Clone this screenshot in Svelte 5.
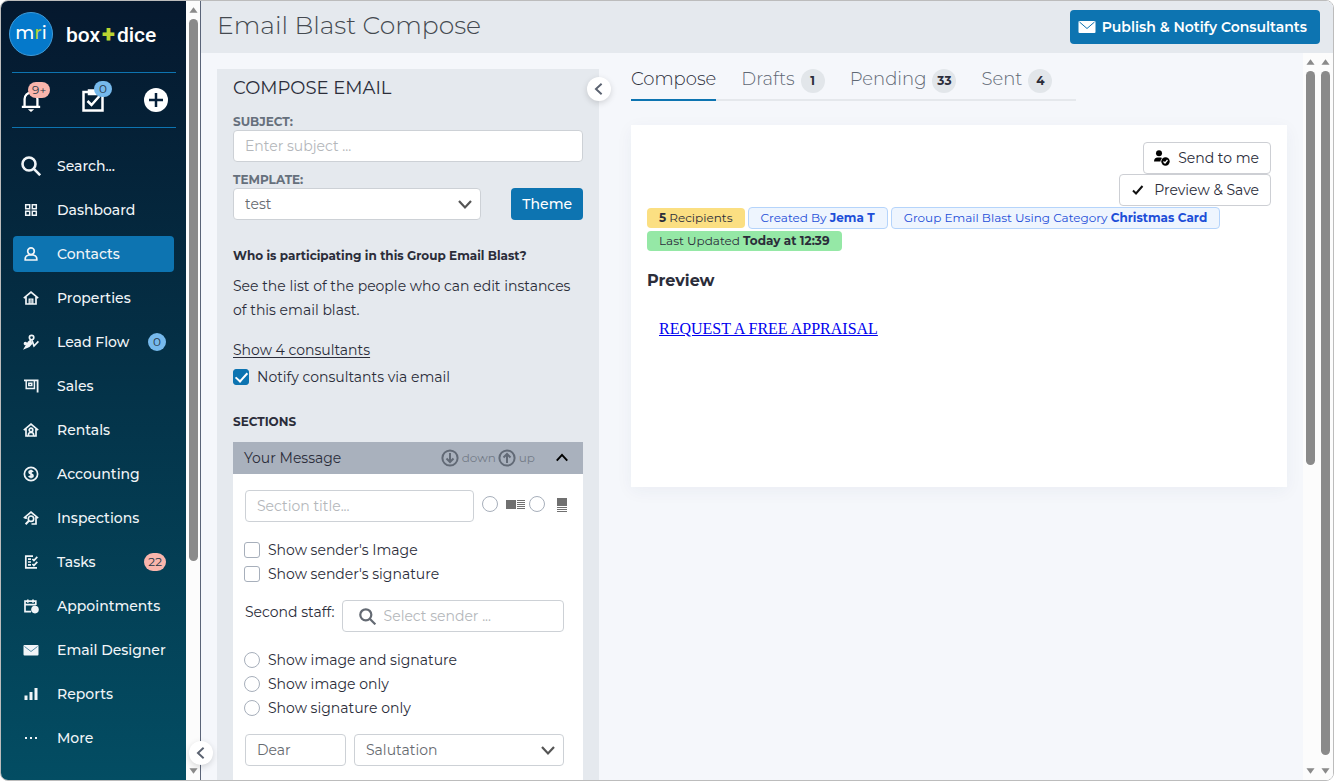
<script>
  // Inner markup of the 16x16 menu icons; stroke and fill come from the parent svg
  const icons = {
    dashboard:
      '<path d="M2.7 2.7h4v4h-4zM9.3 2.7h4v4h-4zM2.7 9.3h4v4h-4zM9.3 9.3h4v4h-4z" stroke-width="1.5"/>',
    contacts:
      '<circle cx="8" cy="5.2" r="3.3"/><path d="M2.2 14v-1c0-2 1.6-3.6 3.6-4h4.4c2 .4 3.6 2 3.6 4v1z"/>',
    properties:
      '<path d="M.8 8.2 8 2.2l7.2 6M3 7v7h10V7"/><path d="M6.2 14V9.2h3.6V14M8 10v4" stroke-width="1.3"/>',
    lead: '<circle cx="8.6" cy="3.6" r="2.2"/><path d="M8 6 5.4 8.4 2 14l4-1.6L9 9" fill="currentColor"/><path d="M9 6.4 11 12l4.4-4.6"/><circle cx="2.4" cy="9.4" r=".9" fill="currentColor"/>',
    sales:
      '<path d="M1 2.4h13.6v12" stroke-width="1.8"/><path d="M3.2 2.4v8h8.200v-8M5.800 5.200h3v2.400h-3z" stroke-width="1.500"/>',
    rentals:
      '<path d="M.8 8.2 8 2.2l7.2 6M3 7v7h2M13 7v7h-2"/><circle cx="8" cy="8" r="1.8"/><path d="M5.4 14v-1.2c0-1.4 1-2.3 2.6-2.3s2.6.9 2.6 2.3V14z"/>',
    accounting:
      '<circle cx="8" cy="8" r="6.6"/><path d="M10 6c-.3-.8-1-1.1-2-1.1-1.1 0-1.9.5-1.9 1.4C6.1 8.3 10 7.5 10 9.7c0 .9-.9 1.4-2 1.4s-1.9-.4-2.2-1.2M8 3.7v8.6"/>',
    inspections:
      '<path d="M.8 8.2 8 2.2l7.2 6M13 7v7H8.5M3 7v2"/><circle cx="8" cy="8.7" r="2.7"/><path d="m6 10.7-3.4 3.5" stroke-width="2"/>',
    tasks:
      '<path d="M10 2.2H2.8v11.6H14M5 5.2h3M5 8h3M5 10.800h3"/><path d="m9.400 5 1.500 1.600 3.400-3.700M9.400 10l1.500 1.600 3.400-3.700"/>',
    appointments:
      '<path d="M12.8 7V3.2H2v10.4h6M2 6.6h10.8M4.8 1.4v3.4M10 1.4v3.4"/><circle cx="12" cy="11.6" r="3.8" fill="currentColor" stroke="none"/>',
    mail: '<rect x=".5" y="3" width="15" height="10.6" rx="1" fill="currentColor" stroke="none"/><path d="m1.5 4.5 6.5 5 6.5-5" stroke="#5a90a8" stroke-width="1"/>',
    reports:
      '<path d="M1.5 14V9.6h3V14zM6.5 14V6h3v8zM11.5 14V2h3v12z" fill="currentColor" stroke="none"/>',
    more: '<path d="M2 7h2v2H2zM7 7h2v2H7zM12 7h2v2h-2z" fill="currentColor" stroke="none"/>',
  };

  const menu = [
    { label: "Dashboard", icon: "dashboard" },
    { label: "Contacts", icon: "contacts" },
    { label: "Properties", icon: "properties" },
    { label: "Lead Flow", icon: "lead", count: 0, tone: "blue" },
    { label: "Sales", icon: "sales" },
    { label: "Rentals", icon: "rentals" },
    { label: "Accounting", icon: "accounting" },
    { label: "Inspections", icon: "inspections" },
    { label: "Tasks", icon: "tasks", count: 22, tone: "pink" },
    { label: "Appointments", icon: "appointments" },
    { label: "Email Designer", icon: "mail" },
    { label: "Reports", icon: "reports" },
    { label: "More", icon: "more" },
  ];

  const tabs = [
    { label: "Compose" },
    { label: "Drafts", count: 1 },
    { label: "Pending", count: 33 },
    { label: "Sent", count: 4 },
  ];

  const staffOptions = ["Show image and signature", "Show image only", "Show signature only"];

  let current = $state("Contacts");
  let activeTab = $state("Compose");
  let subject = $state("");
  let notify = $state(true);
  let showImage = $state(false);
  let showSignature = $state(false);
  let staffDisplay = $state("");
  let layout = $state("");
  let open = $state(true);
</script>

{#snippet chevron(dir)}
  <svg class="chevron {dir}" viewBox="0 0 16 16" aria-hidden="true"><path d="m2 5 6 6.5L14 5" /></svg>
{/snippet}

{#snippet search()}
  <svg class="search-icon" viewBox="0 0 20 20" aria-hidden="true">
    <circle cx="8" cy="8" r="6.5" /><path d="m12.6 12.6 6.6 6.6" />
  </svg>
{/snippet}

{#snippet scrollbar(size)}
  <div class="scrollbar" aria-hidden="true">
    <svg viewBox="0 0 10 6"><path d="M5 0 9.5 6h-9z" /></svg>
    <div class="track"><div class="thumb" style={`height:${size}%`}></div></div>
    <svg viewBox="0 0 10 6"><path d="M5 6 .5 0h9z" /></svg>
  </div>
{/snippet}

<div class="app">
  <aside class="sidebar">
    <div class="brand">
      <span class="logo">m<i>r</i>i</span>
      <span class="wordmark">box<b>+</b>dice</span>
    </div>

    <div class="shortcuts">
      <button aria-label="Notifications">
        <svg viewBox="0 0 24 24"><path d="M5 19v-8a7 7 0 0 1 14 0v8M2 19.500h20" /><path d="M8.500 22h7l-3.500 3z" fill="currentColor" stroke="none" /></svg>
        <span class="pill pink">9+</span>
      </button>
      <button aria-label="To do">
        <svg viewBox="0 0 24 24"><path d="M2.500 4h19v18.500h-19zM8 2.500h8V6H8z" /><path d="m6.500 13 4 4 8-9" /></svg>
        <span class="pill blue">0</span>
      </button>
      <button aria-label="Add">
        <svg viewBox="0 0 24 24"><circle cx="12" cy="12" r="12" fill="#fff" stroke="none" /><path d="M12 5v14M5 12h14" stroke="#06203a" /></svg>
      </button>
    </div>

    <nav>
      <a class="item" href="#search">{@render search()}<span>Search...</span></a>
      {#each menu as m}
        <a class="item" class:active={current === m.label} href="#{m.icon}" onclick={() => (current = m.label)}>
          <svg class="icon" viewBox="0 0 16 16" aria-hidden="true">{@html icons[m.icon]}</svg>
          <span>{m.label}</span>
          {#if m.count !== undefined}<span class="pill {m.tone}">{m.count}</span>{/if}
        </a>
      {/each}
    </nav>
  </aside>
  {@render scrollbar(73)}

  <main>
    <button class="round collapse-menu" aria-label="Collapse menu">{@render chevron("left")}</button>
    <header>
      <h1>Email Blast Compose</h1>
      <button class="primary publish">
        <svg viewBox="0 0 18 14" aria-hidden="true">
          <rect x=".5" y="1" width="17" height="12" rx="1" fill="#fff" />
          <path d="m1.500 2 7.500 6.500L16.500 2" fill="none" stroke="#0d74b1" />
        </svg>
        Publish &amp; Notify Consultants
      </button>
    </header>

    <div class="content">
      <section class="compose">
        <button class="round collapse-panel" aria-label="Collapse panel">{@render chevron("left")}</button>
        <h2>COMPOSE EMAIL</h2>
        <label class="caption" for="subject">SUBJECT:</label>
        <input class="field" id="subject" placeholder="Enter subject ..." bind:value={subject} />
        <label class="caption template-caption" for="template">TEMPLATE:</label>
        <div class="template">
          <div class="select">
            <select class="field" id="template"><option>test</option></select>
            {@render chevron("down")}
          </div>
          <button class="primary">Theme</button>
        </div>

        <h3>Who is participating in this Group Email Blast?</h3>
        <p>See the list of the people who can edit instances of this email blast.</p>
        <a class="consultants" href="#consultants">Show 4 consultants</a>
        <label class="check notify"><input type="checkbox" bind:checked={notify} />Notify consultants via email</label>

        <h3 class="sections">SECTIONS</h3>
        <div class="section-head">
          <span class="name">Your Message</span>
          <button class="move">
            <svg viewBox="0 0 18 18" aria-hidden="true"><circle cx="9" cy="9" r="7.600" /><path d="M9 4v9M5.500 9.500 9 13l3.500-3.500" /></svg>down
          </button>
          <button class="move">
            <svg viewBox="0 0 18 18" aria-hidden="true"><circle cx="9" cy="9" r="7.600" /><path d="M9 14V5M5.500 8.500 9 5l3.500 3.500" /></svg>up
          </button>
          <button class="toggle" aria-label="Toggle section" onclick={() => (open = !open)}>{@render chevron("up")}</button>
        </div>

        {#if open}
          <div class="section-body">
            <div class="title-row">
              <input class="field" aria-label="Section title" placeholder="Section title..." />
              <label>
                <input type="radio" name="layout" value="side" aria-label="Image beside text" bind:group={layout} />
                <svg viewBox="0 0 20 16" aria-hidden="true"><path d="M0 4h10v9H0zM11 4h8v1h-8zM11 6h8v1h-8zM11 8h8v1h-8zM11 10h8v1h-8zM11 12h8v1h-8z" /></svg>
              </label>
              <label class="stacked">
                <input type="radio" name="layout" value="stack" aria-label="Image above text" bind:group={layout} />
                <svg viewBox="0 0 10 16" aria-hidden="true"><path d="M0 2h10v8H0zM0 11h10v1H0zM0 13h10v1H0zM0 15h10v1H0z" /></svg>
              </label>
            </div>

            <div class="options">
              <label class="check"><input type="checkbox" bind:checked={showImage} />Show sender's Image</label>
              <label class="check"><input type="checkbox" bind:checked={showSignature} />Show sender's signature</label>
            </div>

            <div class="staff">
              <label for="staff">Second staff:</label>
              <div class="lookup">
                {@render search()}
                <input class="field" id="staff" placeholder="Select sender ..." />
              </div>
            </div>

            <div class="options">
              {#each staffOptions as option}
                <label class="check"><input type="radio" name="display" value={option} bind:group={staffDisplay} />{option}</label>
              {/each}
            </div>

            <div class="greeting">
              <input class="field" aria-label="Greeting" value="Dear" />
              <div class="select">
                <select class="field" aria-label="Salutation"><option>Salutation</option></select>
                {@render chevron("down")}
              </div>
            </div>
          </div>
        {/if}
      </section>

      <section class="result">
        <div class="tabs" role="tablist">
          {#each tabs as t}
            <button role="tab" aria-selected={activeTab === t.label} onclick={() => (activeTab = t.label)}>
              {t.label}{#if t.count}<span class="badge">{t.count}</span>{/if}
            </button>
          {/each}
        </div>

        <div class="card">
          <div class="actions">
            <button>
              <svg viewBox="0 0 16 16" aria-hidden="true"><circle cx="5" cy="3.300" r="3" /><path d="M0 11.500C0 9 1.500 7.500 3.500 7.500h3.200c.6 0 1 .2 1.400.5-1 1-1.600 2.200-1.600 3.500z" /><circle cx="11.500" cy="11.500" r="4.200" /><path d="m9.500 11.500 1.500 1.500 2.500-3" fill="none" stroke="#fff" stroke-width="1.200" /></svg>
              Send to me
            </button>
            <button>
              <svg viewBox="0 0 16 16" aria-hidden="true"><path d="m3 8.500 3 3L12.500 4" fill="none" stroke="#111" stroke-width="2" /></svg>
              Preview &amp; Save
            </button>
          </div>
          <div class="chips">
            <span class="chip yellow"><b>5</b> Recipients</span>
            <span class="chip info">Created By <b>Jema T</b></span>
            <span class="chip info">Group Email Blast Using Category <b>Christmas Card</b></span>
            <span class="chip green">Last Updated <b>Today at 12:39</b></span>
          </div>
          <h4>Preview</h4>
          <div class="preview"><a href="#appraisal">REQUEST A FREE APPRAISAL</a></div>
        </div>
      </section>

      {@render scrollbar(57)}
      {@render scrollbar(99)}
    </div>
  </main>
</div>

<style>
  :global(body) {
    margin: 0;
  }
  .app,
  .app :global(*) {
    box-sizing: border-box;
  }
  .app {
    display: flex;
    height: 100vh;
    overflow: hidden;
    border: 1px solid #bcbcbc;
    border-radius: 8px;
    background: #fcfcfc;
    color: #2b2d3a;
    font-family: Montserrat, Inter, "Open Sans", sans-serif;
    font-size: 14px;
    line-height: 24px;
  }
  button,
  input,
  select {
    margin: 0;
    font: inherit;
  }
  button {
    padding: 0;
    border: 0;
    background: none;
    color: inherit;
    cursor: pointer;
  }
  h1,
  h2,
  h3,
  h4,
  p {
    margin: 0;
  }
  svg {
    display: block;
    flex: none;
  }

  /* menu */
  .sidebar {
    flex: 0 0 185px;
    padding: 11px 10px 0 11px;
    background: linear-gradient(#05182e, #034d63);
    color: #fff;
  }
  .sidebar + .scrollbar {
    flex-basis: 14px;
  }
  .brand {
    display: flex;
    align-items: center;
    gap: 13px;
    margin-left: -3px;
    height: 44px;
  }
  .logo {
    width: 44px;
    height: 44px;
    border: 1px solid #3f9bd9;
    border-radius: 50%;
    background: #0579cb;
    font-size: 18px;
    font-weight: 500;
    line-height: 40px;
    text-align: center;
  }
  .logo i {
    color: #b9d432;
    font-style: normal;
  }
  .wordmark {
    font-family: Roboto, sans-serif;
    font-size: 21px;
    font-weight: 500;
  }
  .wordmark b {
    margin: 0 2px;
    color: #b9d432;
    font-size: 24px;
    font-weight: 900;
    line-height: 24px;
  }
  .shortcuts {
    display: flex;
    justify-content: space-between;
    align-items: center;
    height: 56px;
    margin-top: 16px;
    padding: 0 8px;
    border: solid #0d74b1;
    border-width: 1px 0;
  }
  .shortcuts button {
    position: relative;
  }
  .shortcuts svg {
    width: 24px;
    height: 24px;
    fill: none;
    stroke: currentColor;
    stroke-width: 2.5;
    overflow: visible;
  }
  .shortcuts button:first-child svg {
    width: 22px;
    height: 22px;
  }
  .shortcuts .pill {
    position: absolute;
    top: -7px;
    left: 8px;
    height: 16px;
    line-height: 16px;
  }
  .shortcuts .blue {
    left: 13px;
  }
  nav {
    display: flex;
    flex-direction: column;
    gap: 8px;
    margin-top: 20px;
  }
  .item {
    display: flex;
    align-items: center;
    height: 36px;
    margin: 0 2px 0 1px;
    padding: 0 8px;
    border-radius: 4px;
    color: #f1f5f8;
    font-weight: 500;
    text-decoration: none;
    white-space: nowrap;
  }
  .item.active {
    background: #0d74b1;
  }
  .item > svg {
    margin-right: 16px;
  }
  .item > .icon {
    width: 16px;
    height: 16px;
    margin: 0 18px 0 2px;
    fill: none;
    stroke: currentColor;
    stroke-width: 1.7;
  }
  .search-icon {
    width: 20px;
    height: 20px;
    fill: none;
    stroke: currentColor;
    stroke-width: 2.6;
  }
  .pill {
    min-width: 18px;
    height: 18px;
    margin-left: auto;
    padding: 0 4px;
    border-radius: 9px;
    color: #263746;
    font-size: 12px;
    font-weight: 400;
    line-height: 18px;
    text-align: center;
  }
  .pink {
    background: #f9b5ac;
  }
  .blue {
    background: #76b9ec;
  }

  .scrollbar {
    display: flex;
    flex: 0 0 15px;
    flex-direction: column;
    align-items: center;
    padding: 6px 0;
    background: #fcfcfc;
  }
  .scrollbar svg {
    width: 9px;
    height: 6px;
    fill: #8a8a8a;
  }
  .track {
    flex: 1;
    width: 9px;
    margin: 6px 0;
  }
  .thumb {
    border-radius: 5px;
    background: #8a8a8a;
  }

  main {
    position: relative;
    display: flex;
    flex: 1;
    flex-direction: column;
    min-width: 0;
    border-left: 1px solid #5a6478;
    background: #f5f7fb;
  }
  header {
    display: flex;
    flex: none;
    align-items: center;
    justify-content: space-between;
    height: 52px;
    padding: 0 13px 4px 16px;
    background: #e5e9ee;
  }
  h1 {
    color: #444950;
    font-size: 25px;
    font-weight: 300;
  }
  .primary {
    height: 32px;
    padding: 0 11px;
    border-radius: 4px;
    background: #0d74b1;
    color: #fff;
    font-weight: 500;
  }
  .publish {
    display: flex;
    align-items: center;
    gap: 6px;
    height: 34px;
    margin-top: 4px;
    padding: 0 13px 0 8px;
    font-weight: 600;
  }
  .publish svg {
    width: 18px;
    height: 14px;
  }
  .content {
    display: flex;
    flex: 1;
    min-height: 0;
  }

  .round {
    position: absolute;
    z-index: 1;
    display: grid;
    place-items: center;
    width: 24px;
    height: 24px;
    border-radius: 50%;
    background: #fff;
    box-shadow: 0 2px 6px rgba(0, 0, 0, 0.15);
    color: #5a6270;
  }
  .collapse-menu {
    bottom: 15px;
    left: -12px;
  }
  .collapse-panel {
    top: 8px;
    right: -12px;
  }
  .chevron {
    width: 14px;
    height: 14px;
    fill: none;
    stroke: currentColor;
    stroke-width: 2.2;
  }
  .chevron.left {
    transform: rotate(90deg);
  }
  .chevron.up {
    transform: rotate(180deg);
  }

  /* compose form */
  .compose {
    position: relative;
    display: flex;
    flex: 0 0 382px;
    flex-direction: column;
    margin: 16px 0 0 16px;
    padding: 0 16px;
    background: #e5e9ee;
  }
  .compose > * {
    flex: none;
  }
  h2 {
    margin-bottom: 7px;
    font-size: 18px;
    font-weight: 400;
    line-height: 38px;
  }
  .caption {
    color: #66707c;
    font-size: 12px;
    font-weight: 700;
    line-height: 16px;
  }
  .template-caption {
    margin-top: 10px;
  }
  .field {
    width: 100%;
    min-width: 0;
    height: 32px;
    padding: 0 11px;
    border: 1px solid #cdd1d6;
    border-radius: 4px;
    background: #fff;
    color: #666a70;
    appearance: none;
  }
  .field::placeholder {
    color: #b4b7bb;
    opacity: 1;
  }
  .template {
    display: flex;
    gap: 30px;
  }
  .select {
    position: relative;
    flex: 1;
  }
  .select .chevron {
    position: absolute;
    top: 8px;
    right: 8px;
    width: 16px;
    height: 16px;
    color: #555;
    pointer-events: none;
  }
  h3 {
    margin-top: 24px;
    font-size: 12px;
    font-weight: 700;
  }
  .compose p {
    margin-top: 6px;
  }
  .consultants {
    align-self: flex-start;
    margin-top: 16px;
    color: inherit;
    text-underline-offset: 2px;
  }
  .check {
    display: flex;
    align-items: center;
    gap: 8px;
  }
  .notify {
    margin-top: 3px;
  }
  input[type="checkbox"],
  input[type="radio"] {
    flex: none;
    width: 16px;
    height: 16px;
    border: 1px solid #a7afbb;
    border-radius: 3px;
    background: #fff;
    appearance: none;
  }
  input[type="radio"] {
    border-radius: 50%;
  }
  input[type="radio"]:checked {
    border: 5px solid #0d74b1;
  }
  input[type="checkbox"]:checked {
    display: grid;
    place-items: center;
    border-color: #0d74b1;
    background: #0d74b1;
  }
  input[type="checkbox"]:checked::after {
    content: "";
    width: 5px;
    height: 10px;
    margin-bottom: 3px;
    border: solid #fff;
    border-width: 0 2px 2px 0;
    transform: rotate(42deg);
  }
  h3.sections {
    margin: 21px 0 8px;
  }
  .section-head {
    display: flex;
    align-items: center;
    height: 32px;
    padding: 0 14px 0 11px;
    background: #a9b1bd;
  }
  .name {
    flex: 1;
  }
  .move {
    display: flex;
    align-items: center;
    gap: 3px;
    margin-left: 2px;
    color: #747c88;
    font-size: 12px;
  }
  .move svg {
    width: 18px;
    height: 18px;
    fill: none;
    stroke: #626a76;
    stroke-width: 2;
  }
  .toggle {
    margin-left: 20px;
    color: #000;
  }
  .compose > .section-body {
    display: flex;
    flex: 1 0 auto;
    flex-direction: column;
    padding: 16px 19px 14px 12px;
    background: #fff;
  }
  .title-row {
    display: flex;
    align-items: center;
    gap: 8px;
    margin-right: -3px;
  }
  .title-row label {
    display: flex;
    align-items: center;
    gap: 8px;
    padding-bottom: 4px;
  }
  .title-row label.stacked {
    gap: 12px;
    margin-left: -5px;
  }
  .title-row svg {
    height: 16px;
    fill: #707070;
  }
  .options {
    margin: 16px 0 14px -1px;
  }
  .staff {
    display: flex;
    gap: 7px;
    white-space: nowrap;
  }
  .lookup {
    position: relative;
    flex: 1;
  }
  .lookup .search-icon {
    position: absolute;
    top: 8px;
    left: 17px;
    width: 17px;
    height: 17px;
    color: #646a73;
  }
  .lookup .field {
    padding-left: 41px;
  }
  .greeting {
    display: flex;
    gap: 8px;
  }
  .greeting > .field {
    width: 101px;
  }

  /* tabs and preview card */
  .result {
    flex: 1;
    min-width: 0;
    margin: 12px 16px 0 32px;
  }
  .tabs {
    display: inline-flex;
    gap: 25px;
    height: 36px;
    padding-right: 24px;
    box-shadow: inset 0 -2px #e5e8ec;
  }
  .tabs button {
    display: flex;
    align-items: center;
    gap: 6px;
    padding-bottom: 6px;
    border-bottom: 2px solid transparent;
    color: #5f6874;
    font-size: 18px;
    font-weight: 300;
    white-space: nowrap;
  }
  .tabs button[aria-selected="true"] {
    border-color: #0d74b1;
    color: #2b2d3a;
  }
  .badge {
    width: 24px;
    height: 24px;
    margin-top: 4px;
    border-radius: 50%;
    background: #e2e6ea;
    color: #2b2d3a;
    font-size: 12px;
    font-weight: 700;
    line-height: 24px;
    text-align: center;
  }
  .card {
    margin-top: 24px;
    padding: 17px 16px 16px;
    background: #fff;
    box-shadow: 0 4px 16px rgba(40, 60, 90, 0.05);
  }
  .actions {
    display: flex;
    flex-direction: column;
    align-items: flex-end;
  }
  .actions button {
    display: flex;
    align-items: center;
    gap: 8px;
    height: 32px;
    padding: 0 11px 0 10px;
    border: 1px solid #cdcfd4;
    border-radius: 4px;
  }
  .actions svg {
    width: 16px;
    height: 16px;
  }
  .chips {
    display: flex;
    flex-wrap: wrap;
    align-items: center;
    gap: 2px 3px;
    margin-top: 1px;
  }
  .chip {
    padding: 0 12px;
    border-radius: 4px;
    font-size: 12px;
    line-height: 20px;
  }
  .yellow {
    background: #fbdf82;
  }
  .green {
    background: #95e8a6;
  }
  .info {
    border: 1px solid #b5d4fb;
    background: #eef5fe;
    color: #1d4ed8;
  }
  h4 {
    margin-top: 18px;
    font-size: 16px;
    font-weight: 700;
  }
  .preview {
    min-height: 178px;
    padding: 24px 12px;
    font-family: "Liberation Serif", serif;
    font-size: 16px;
  }
  .preview a {
    color: #0000ee;
  }
</style>
